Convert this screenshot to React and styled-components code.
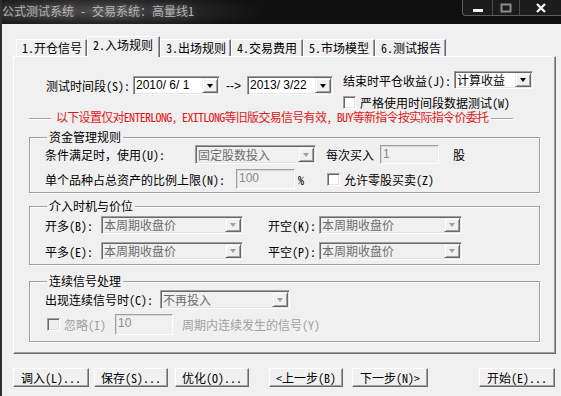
import styled, { createGlobalStyle } from 'styled-components'

const UI_FONT = `"Noto Sans Mono CJK SC", "Noto Sans CJK SC", "Liberation Sans", sans-serif`

const GlobalStyle = createGlobalStyle`
  html, body { margin: 0; padding: 0; }
  body {
    font-family: ${UI_FONT};
    font-size: 12px;
    color: #000;
    background: #f0f0f0;
  }
  * { box-sizing: border-box; }
`

const Window = styled.div`
  width: 561px;
  height: 396px;
  overflow: hidden;
  background: #f0f0f0;
  border-left: 2px solid #2e2e2e;
  display: flex;
  flex-direction: column;
`

const TitleBar = styled.div`
  height: 24px;
  flex: none;
  display: flex;
  align-items: flex-start;
  margin-left: -2px;
  background: radial-gradient(ellipse 170px 22px at 95px 11px, #4a4a4a 0%, #262626 55%, #101010 100%);
`

const TitleText = styled.div`
  padding-left: 2px;
  line-height: 22px;
  color: #b4b4b4;
  text-shadow: 0 0 6px rgba(255, 255, 255, 0.35);
  white-space: nowrap;
`

const Controls = styled.div`
  margin-left: auto;
  display: flex;
  height: 16px;
  border: 1px solid #5c5c5c;
  border-top: none;
  border-right: none;
  border-bottom-left-radius: 4px;
  background: #1c1c1c;
  overflow: hidden;
`

const CtrlButton = styled.div`
  width: ${p => p.$w}px;
  display: flex;
  align-items: center;
  justify-content: center;
  border-left: ${p => (p.$first ? 'none' : '1px solid #4a4a4a')};
`

const Client = styled.div`
  padding: 12px 0 0 11px;
  display: flex;
  flex-direction: column;
`

const TabStrip = styled.div`
  display: flex;
  align-items: flex-end;
  height: 20px;
  padding-left: 3px;
  position: relative;
  z-index: 1;
`

const Tab = styled.div`
  width: ${p => p.$w}px;
  height: ${p => (p.$active ? 21 : 17)}px;
  margin-bottom: ${p => (p.$active ? -1 : 0)}px;
  background: #f0f0f0;
  border-top: 1px solid #fff;
  border-left: 1px solid #fff;
  border-right: 1px solid #696969;
  box-shadow: inset -1px 0 0 #a0a0a0;
  display: flex;
  align-items: ${p => (p.$active ? 'flex-start' : 'center')};
  padding-top: ${p => (p.$active ? 1 : 0)}px;
  padding-left: 5px;
  white-space: nowrap;
  line-height: 14px;
`

const Panel = styled.div`
  width: 543px;
  height: 298px;
  border-top: 1px solid #fff;
  border-left: 1px solid #fff;
  border-right: 1px solid #696969;
  border-bottom: 1px solid #696969;
  box-shadow: inset -1px -1px 0 #a0a0a0;
  padding-left: 15px;
  display: flex;
  flex-direction: column;
`

const TopRow = styled.div`
  display: flex;
  margin-top: 14px;
`

const DateGroup = styled.div`
  display: flex;
  align-items: center;
  margin-top: 5px;
  margin-left: 17px;
  height: 19px;
`

const SideColumn = styled.div`
  display: flex;
  flex-direction: column;
  margin-left: 10px;
`

const Row = styled.div`
  display: flex;
  align-items: center;
  height: ${p => p.$h || 18}px;
  margin-top: ${p => p.$mt || 0}px;
  margin-left: ${p => p.$ml || 0}px;
`

const Label = styled.span`
  flex: none;
  width: ${p => (p.$w ? `${p.$w}px` : 'auto')};
  margin-left: ${p => p.$ml || 0}px;
  color: ${p => (p.$disabled ? '#a0a0a0' : '#000')};
  white-space: nowrap;
  line-height: 13px;
`

const Arrow = styled.span`
  width: 27px;
  text-align: center;
  font-family: "Liberation Sans", sans-serif;
`

const Combo = styled.div`
  flex: none;
  width: ${p => p.$w}px;
  height: ${p => p.$h || 18}px;
  margin-left: ${p => p.$ml || 0}px;
  display: flex;
  border: 1px solid;
  border-color: #a0a0a0 #fff #fff #a0a0a0;
  box-shadow: inset 1px 1px 0 #696969, inset -1px -1px 0 #e3e3e3;
  background: ${p => (p.$disabled ? '#f0f0f0' : '#fff')};
  padding: 1px;
`

const ComboValue = styled.span`
  flex: 1;
  min-width: 0;
  padding-left: 1px;
  line-height: ${p => p.$lh || 14}px;
  white-space: nowrap;
  color: ${p => (p.$disabled ? '#6d6d6d' : '#000')};
  font-family: ${p => (p.$latin ? '"Liberation Sans", sans-serif' : UI_FONT)};
`

const DropButton = styled.span`
  width: 16px;
  flex: none;
  background: #f0f0f0;
  border: 1px solid;
  border-color: #f0f0f0 #696969 #696969 #f0f0f0;
  box-shadow: inset 1px 1px 0 #fff, inset -1px -1px 0 #a0a0a0;
  display: flex;
  align-items: center;
  justify-content: center;
  &::after {
    content: '';
    border-left: 3.5px solid transparent;
    border-right: 3.5px solid transparent;
    border-top: 4px solid ${p => (p.$disabled ? '#a0a0a0' : '#000')};
  }
`

const TextBox = styled.div`
  flex: none;
  width: ${p => p.$w}px;
  height: ${p => p.$h || 19}px;
  margin-left: ${p => p.$ml || 0}px;
  border: 1px solid;
  border-color: #a0a0a0 #fff #fff #a0a0a0;
  box-shadow: inset 1px 1px 0 #d8d8d8;
  background: #f0f0f0;
  color: #8a8a8a;
  font-family: "Liberation Sans", sans-serif;
  padding: 1px 0 0 2px;
  line-height: 14px;
`

const Check = styled.span`
  flex: none;
  width: 13px;
  height: 13px;
  margin-left: ${p => p.$ml || 0}px;
  border: 1px solid;
  border-color: #a0a0a0 #fff #fff #a0a0a0;
  box-shadow: inset 1px 1px 0 #696969, inset -1px -1px 0 #e3e3e3;
  background: ${p => (p.$disabled ? '#f0f0f0' : '#fff')};
`

const Notice = styled.div`
  display: flex;
  align-items: center;
  height: 14px;
  margin-top: 2px;
`

const NoticeLine = styled.span`
  flex: none;
  width: ${p => p.$w}px;
  height: 2px;
  margin-top: 4px;
  border-top: 1px solid #a0a0a0;
  border-bottom: 1px solid #fff;
`

const NoticeText = styled.span`
  color: #e01818;
  margin: 0 3px 0 5px;
  white-space: nowrap;
  line-height: 14px;
  letter-spacing: -0.7px;
`

const Group = styled.fieldset`
  width: 511px;
  margin: ${p => p.$mt}px 0 0 0;
  padding: ${p => p.$pt}px 0 ${p => p.$pb}px 15px;
  border: 1px solid #a0a0a0;
  box-shadow: inset 1px 1px 0 #fff, 1px 1px 0 #fff;
  min-width: 0;
`

const Legend = styled.legend`
  padding: 0 2px;
  margin-left: 2px;
  line-height: 14px;
  font-size: 12px;
`

const Footer = styled.div`
  display: flex;
  margin-top: 14px;
`

const Button = styled.div`
  flex: none;
  width: ${p => p.$w}px;
  height: 19px;
  margin-left: ${p => p.$ml || 0}px;
  border: 1px solid;
  border-color: #fff #696969 #696969 #fff;
  box-shadow: inset -1px -1px 0 #a0a0a0;
  background: #f0f0f0;
  display: flex;
  align-items: center;
  justify-content: center;
  line-height: 14px;
  white-space: nowrap;
`

const tabs = [
  { label: '1.开仓信号', w: 71 },
  { label: '2.入场规则', w: 73, active: true },
  { label: '3.出场规则', w: 71 },
  { label: '4.交易费用', w: 72 },
  { label: '5.市场模型', w: 72 },
  { label: '6.测试报告', w: 71 },
]

const buttons = [
  { label: '调入(L)...', w: 76, ml: 0 },
  { label: '保存(S)...', w: 74, ml: 5 },
  { label: '优化(O)...', w: 74, ml: 7 },
  { label: '<上一步(B)', w: 74, ml: 20 },
  { label: '下一步(N)>', w: 76, ml: 9 },
  { label: '开始(E)...', w: 76, ml: 51 },
]

function ComboBox({ w, h, ml, value, disabled, latin }) {
  return (
    <Combo $w={w} $h={h} $ml={ml} $disabled={disabled}>
      <ComboValue $disabled={disabled} $latin={latin} $lh={(h || 18) - 4}>
        {value}
      </ComboValue>
      <DropButton $disabled={disabled} />
    </Combo>
  )
}

export default function App() {
  return (
    <>
      <GlobalStyle />
      <Window>
        <TitleBar>
          <TitleText>公式测试系统 - 交易系统：高量线1</TitleText>
          <Controls>
            <CtrlButton $w={29} $first>
              <svg width="12" height="14" viewBox="0 0 12 14">
                <rect x="1" y="8" width="10" height="3" fill="#f4f4f4" />
              </svg>
            </CtrlButton>
            <CtrlButton $w={27}>
              <svg width="12" height="14" viewBox="0 0 12 14">
                <rect x="1.5" y="3.5" width="9" height="7" fill="none" stroke="#8c8c8c" strokeWidth="2" />
              </svg>
            </CtrlButton>
            <CtrlButton $w={42}>
              <svg width="12" height="12" viewBox="0 0 12 12">
                <path d="M2 2 L10 10 M10 2 L2 10" stroke="#f4f4f4" strokeWidth="2.4" />
              </svg>
            </CtrlButton>
          </Controls>
        </TitleBar>
        <Client>
          <TabStrip>
            {tabs.map(t => (
              <Tab key={t.label} $w={t.w} $active={t.active}>
                {t.label}
              </Tab>
            ))}
          </TabStrip>
          <Panel>
            <TopRow>
              <DateGroup>
                <Label $w={87}>测试时间段(S):</Label>
                <ComboBox w={87} h={19} value="2010/ 6/ 1" latin />
                <Arrow>--&gt;</Arrow>
                <ComboBox w={86} h={19} value="2013/ 3/22" latin />
              </DateGroup>
              <SideColumn>
                <Row $h={18}>
                  <Label $w={111}>结束时平仓收益(J):</Label>
                  <ComboBox w={79} h={18} value="计算收益" />
                </Row>
                <Row $h={12} $mt={7}>
                  <Check />
                  <Label $ml={4}>严格使用时间段数据测试(W)</Label>
                </Row>
              </SideColumn>
            </TopRow>

            <Notice>
              <NoticeLine $w={22} />
              <NoticeText>以下设置仅对ENTERLONG, EXITLONG等旧版交易信号有效, BUY等新指令按实际指令价委托</NoticeText>
              <NoticeLine $w={22} />
            </Notice>

            <Group $mt={6} $pt={1} $pb={3}>
              <Legend>资金管理规则</Legend>
              <Row $h={19}>
                <Label $w={150}>条件满足时，使用(U):</Label>
                <ComboBox w={121} h={19} value="固定股数投入" disabled />
                <Label $ml={10} $w={54}>每次买入</Label>
                <TextBox $w={59} $h={19}>1</TextBox>
                <Label $ml={14}>股</Label>
              </Row>
              <Row $h={20} $mt={5}>
                <Label $w={191}>单个品种占总资产的比例上限(N):</Label>
                <TextBox $w={59} $h={20}>100</TextBox>
                <Label $ml={3} $w={29}>%</Label>
                <Check />
                <Label $ml={4}>允许零股买卖(Z)</Label>
              </Row>
            </Group>

            <Group $mt={6} $pt={3} $pb={4}>
              <Legend>介入时机与价位</Legend>
              <Row $h={18}>
                <Label $w={56}>开多(B):</Label>
                <ComboBox w={142} h={18} value="本周期收盘价" disabled />
                <Label $ml={25} $w={51}>开空(K):</Label>
                <ComboBox w={143} h={18} value="本周期收盘价" disabled />
              </Row>
              <Row $h={18} $mt={8}>
                <Label $w={56}>平多(E):</Label>
                <ComboBox w={142} h={18} value="本周期收盘价" disabled />
                <Label $ml={25} $w={51}>平空(P):</Label>
                <ComboBox w={143} h={18} value="本周期收盘价" disabled />
              </Row>
            </Group>

            <Group $mt={9} $pt={2} $pb={6}>
              <Legend>连续信号处理</Legend>
              <Row $h={19}>
                <Label $w={115}>出现连续信号时(C):</Label>
                <ComboBox w={130} h={19} value="不再投入" disabled />
              </Row>
              <Row $h={21} $mt={5}>
                <Check $ml={2} $disabled />
                <Label $ml={4} $w={51} $disabled>忽略(I)</Label>
                <TextBox $w={58} $h={21}>10</TextBox>
                <Label $ml={9} $disabled>周期内连续发生的信号(Y)</Label>
              </Row>
            </Group>
          </Panel>
          <Footer>
            {buttons.map(b => (
              <Button key={b.label} $w={b.w} $ml={b.ml}>
                {b.label}
              </Button>
            ))}
          </Footer>
        </Client>
      </Window>
    </>
  )
}
